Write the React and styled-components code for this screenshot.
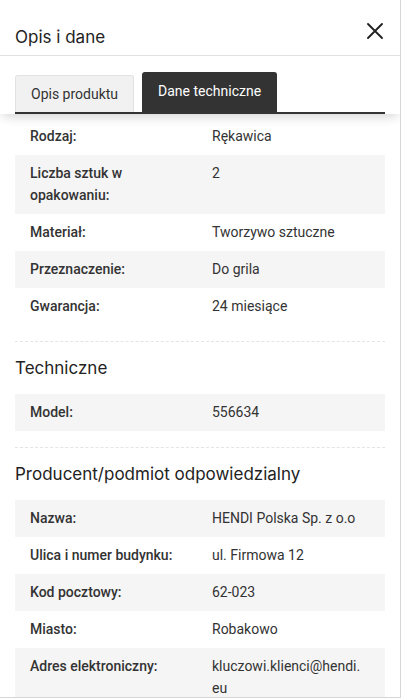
import React from "react";
import styled, { createGlobalStyle } from "styled-components";

const Global = createGlobalStyle`
  html, body { margin: 0; padding: 0; background: #fff; }
  body { font-family: Roboto, "Liberation Sans", Arial, sans-serif; color: #333; }
  * { box-sizing: border-box; }
`;

const Sheet = styled.div`
  width: 401px;
  height: 698px;
  overflow: hidden;
  border-right: 1px solid #d6d6d6;
  border-bottom: 1px solid #d6d6d6;
  display: flex;
  flex-direction: column;
  background: #fff;
`;

const Header = styled.header`
  height: 56px;
  flex: none;
  display: flex;
  align-items: flex-start;
  justify-content: space-between;
  padding: 0 16px 0 15px;
  border-bottom: 1px solid #e2e2e2;
`;

const Title = styled.h1`
  margin: 25px 0 0;
  font-family: Inter, "Open Sans", sans-serif;
  font-weight: 400;
  font-size: 17px;
  line-height: 24px;
  letter-spacing: 0;
  color: #222;
`;

const CloseButton = styled.button`
  border: 0;
  background: none;
  padding: 0;
  width: 18px;
  height: 18px;
  margin-top: 22px;
  display: flex;
  align-items: center;
  justify-content: center;
  cursor: pointer;
`;

const TabBar = styled.div`
  flex: none;
  position: relative;
  z-index: 2;
  background: #fff;
  padding: 16px 15px 0;
  box-shadow: 0 6px 10px -3px rgba(0, 0, 0, 0.16);
`;

const TabRow = styled.div`
  display: flex;
  align-items: flex-end;
  gap: 8px;
  border-bottom: 2px solid #333;
`;

const Tab = styled.button`
  font-family: Roboto, "Liberation Sans", sans-serif;
  font-size: 14px;
  border-radius: 3px 3px 0 0;
  padding: 0 15px;
  cursor: pointer;
  height: ${(p) => (p.$active ? "40px" : "37px")};
  background: ${(p) => (p.$active ? "#333" : "#f1f1f1")};
  color: ${(p) => (p.$active ? "#fff" : "#333")};
  border: 1px solid ${(p) => (p.$active ? "#333" : "#e2e2e2")};
  border-bottom: 0;
  padding-bottom: ${(p) => (p.$active ? "3px" : "0")};
`;

const Content = styled.div`
  padding: 4px 15px 0;
`;

const Table = styled.div`
  display: grid;
  grid-template-columns: 182px 1fr;
`;

const Row = styled.div`
  display: contents;
  & > div {
    background: ${(p) => (p.$shade ? "#f5f5f5" : "#fff")};
  }
`;

const Cell = styled.div`
  padding: 7px 15px 8px;
  font-size: 14px;
  line-height: 22px;
  color: #333;
  font-weight: ${(p) => (p.$label ? 500 : 400)};
  overflow-wrap: anywhere;
`;

const Divider = styled.hr`
  margin: 16px 0 0;
  border: 0;
  border-top: 1px dashed #e4e4e4;
`;

const SectionTitle = styled.h2`
  margin: 0;
  padding: 13px 0 13px;
  font-family: Inter, "Open Sans", sans-serif;
  font-weight: 400;
  font-size: 17px;
  line-height: 26px;
  color: #222;
`;

const Close = () => (
  <svg width="18" height="18" viewBox="0 0 18 18">
    <path d="M2 2 L16 16 M16 2 L2 16" stroke="#222" strokeWidth="1.9" strokeLinecap="round" />
  </svg>
);

const general = [
  ["Rodzaj:", "Rękawica"],
  ["Liczba sztuk w opakowaniu:", "2"],
  ["Materiał:", "Tworzywo sztuczne"],
  ["Przeznaczenie:", "Do grila"],
  ["Gwarancja:", "24 miesiące"],
];

const technical = [["Model:", "556634"]];

const producer = [
  ["Nazwa:", "HENDI Polska Sp. z o.o"],
  ["Ulica i numer budynku:", "ul. Firmowa 12"],
  ["Kod pocztowy:", "62-023"],
  ["Miasto:", "Robakowo"],
  ["Adres elektroniczny:", <>kluczowi.klienci@hendi.<wbr />eu</>],
];

const DataTable = ({ rows, startShaded = false }) => (
  <Table>
    {rows.map(([k, v], i) => (
      <Row key={i} $shade={startShaded ? i % 2 === 0 : i % 2 === 1}>
        <Cell $label>{k}</Cell>
        <Cell>{v}</Cell>
      </Row>
    ))}
  </Table>
);

export default function App() {
  return (
    <>
      <Global />
      <Sheet>
        <Header>
          <Title>Opis i dane</Title>
          <CloseButton aria-label="Zamknij">
            <Close />
          </CloseButton>
        </Header>
        <TabBar>
          <TabRow>
            <Tab>Opis produktu</Tab>
            <Tab $active>Dane techniczne</Tab>
          </TabRow>
        </TabBar>
        <Content>
          <DataTable rows={general} />
          <Divider />
          <SectionTitle>Techniczne</SectionTitle>
          <DataTable rows={technical} startShaded />
          <Divider />
          <SectionTitle>Producent/podmiot odpowiedzialny</SectionTitle>
          <DataTable rows={producer} startShaded />
        </Content>
      </Sheet>
    </>
  );
}
